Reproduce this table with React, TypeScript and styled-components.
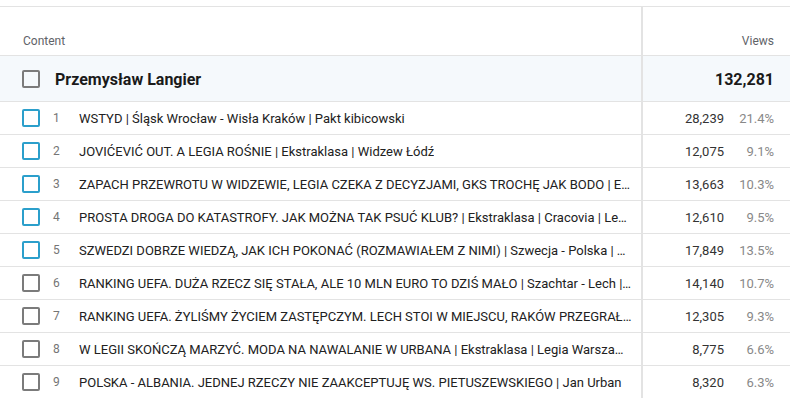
import React from "react";
import styled, { createGlobalStyle } from "styled-components";

const GlobalStyle = createGlobalStyle`
  html, body {
    margin: 0;
    padding: 0;
    background: #fff;
    font-family: Roboto, "Liberation Sans", Arial, sans-serif;
  }
`;

type Row = { title: string; views: string; pct: string };

const rows: Row[] = [
  { title: "WSTYD | Śląsk Wrocław - Wisła Kraków | Pakt kibicowski", views: "28,239", pct: "21.4%" },
  { title: "JOVIĆEVIĆ OUT. A LEGIA ROŚNIE | Ekstraklasa | Widzew Łódź", views: "12,075", pct: "9.1%" },
  { title: "ZAPACH PRZEWROTU W WIDZEWIE, LEGIA CZEKA Z DECYZJAMI, GKS TROCHĘ JAK BODO | Ekstraklasa", views: "13,663", pct: "10.3%" },
  { title: "PROSTA DROGA DO KATASTROFY. JAK MOŻNA TAK PSUĆ KLUB? | Ekstraklasa | Cracovia | Legia", views: "12,610", pct: "9.5%" },
  { title: "SZWEDZI DOBRZE WIEDZĄ, JAK ICH POKONAĆ (ROZMAWIAŁEM Z NIMI) | Szwecja - Polska | Eliminacje", views: "17,849", pct: "13.5%" },
  { title: "RANKING UEFA. DUŻA RZECZ SIĘ STAŁA, ALE 10 MLN EURO TO DZIŚ MAŁO | Szachtar - Lech | Liga", views: "14,140", pct: "10.7%" },
  { title: "RANKING UEFA. ŻYLIŚMY ŻYCIEM ZASTĘPCZYM. LECH STOI W MIEJSCU, RAKÓW PRZEGRAŁ | Ekstraklasa", views: "12,305", pct: "9.3%" },
  { title: "W LEGII SKOŃCZĄ MARZYĆ. MODA NA NAWALANIE W URBANA | Ekstraklasa | Legia Warszawa | Jan Urban", views: "8,775", pct: "6.6%" },
  { title: "POLSKA - ALBANIA. JEDNEJ RZECZY NIE ZAAKCEPTUJĘ WS. PIETUSZEWSKIEGO | Jan Urban", views: "8,320", pct: "6.3%" },
];

const Table = styled.div`
  margin-top: 6px;
  border-top: 1px solid #e3e3e3;
  width: 790px;
`;

const Line = styled.div<{ $bg?: string; $h: number }>`
  display: grid;
  grid-template-columns: 643px 1fr;
  height: ${(p) => p.$h}px;
  background: ${(p) => p.$bg || "#fff"};
  border-bottom: 1px solid #e3e3e3;
  box-sizing: border-box;
`;

const ContentCell = styled.div<{ $align?: string }>`
  display: flex;
  align-items: ${(p) => p.$align || "center"};
  border-right: 2px solid #e3e3e3;
  padding-left: 22px;
  padding-right: 9px;
  min-width: 0;
`;

const ViewsCell = styled.div<{ $align?: string }>`
  display: flex;
  align-items: ${(p) => p.$align || "center"};
  justify-content: flex-end;
  padding-right: 16px;
  gap: 10px;
`;

const HeadLabel = styled.span`
  font-size: 12px;
  color: #5f6368;
  padding-bottom: 7px;
  padding-left: 1px;
`;

const Box = styled.span<{ $color: string }>`
  flex: none;
  width: 14px;
  height: 14px;
  border: 2px solid ${(p) => p.$color};
  border-radius: 2px;
`;

const AuthorName = styled.span`
  margin-left: 15px;
  font-size: 16px;
  font-weight: 700;
  color: #1a1a1a;
  padding-top: 1px;
`;

const Total = styled.span`
  font-size: 16px;
  font-weight: 700;
  color: #1a1a1a;
  padding-top: 1px;
`;

const Index = styled.span`
  flex: none;
  width: 26px;
  margin-left: 13px;
  font-size: 12px;
  color: #757575;
`;

const Title = styled.span`
  font-size: 13px;
  color: #212121;
  white-space: nowrap;
  overflow: hidden;
  text-overflow: ellipsis;
  min-width: 0;
`;

const Views = styled.span`
  font-size: 13px;
  color: #333;
`;

const Pct = styled.span`
  width: 40px;
  text-align: right;
  font-size: 13px;
  color: #888;
`;

export default function App() {
  return (
    <>
      <GlobalStyle />
      <Table>
        <Line $h={49}>
          <ContentCell $align="flex-end">
            <HeadLabel>Content</HeadLabel>
          </ContentCell>
          <ViewsCell $align="flex-end">
            <HeadLabel>Views</HeadLabel>
          </ViewsCell>
        </Line>
        <Line $h={46} $bg="#f5f9fc">
          <ContentCell>
            <Box $color="#7b7b7b" />
            <AuthorName>Przemysław Langier</AuthorName>
          </ContentCell>
          <ViewsCell>
            <Total>132,281</Total>
          </ViewsCell>
        </Line>
        {rows.map((r, i) => (
          <Line key={i} $h={33}>
            <ContentCell>
              <Box $color={i < 5 ? "#2b9fcb" : "#7b7b7b"} />
              <Index>{i + 1}</Index>
              <Title>{r.title}</Title>
            </ContentCell>
            <ViewsCell>
              <Views>{r.views}</Views>
              <Pct>{r.pct}</Pct>
            </ViewsCell>
          </Line>
        ))}
      </Table>
    </>
  );
}
